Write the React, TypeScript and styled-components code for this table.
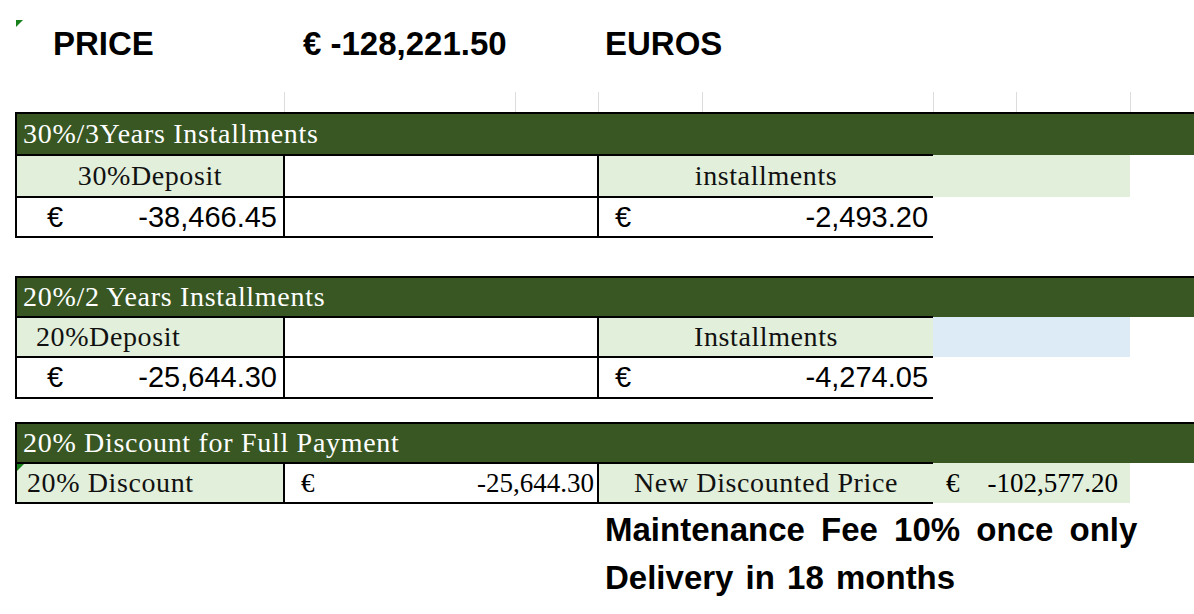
import styled, { createGlobalStyle } from "styled-components";

const GlobalStyle = createGlobalStyle`
  html, body {
    margin: 0;
    padding: 0;
    background: #ffffff;
  }
  body {
    width: 1194px;
    height: 614px;
    overflow: hidden;
  }
`;

const DARK = "#385723";
const LIGHT = "#E2EFDA";
const BLUE = "#DDEBF7";
const LINE = "2px solid #000";

const Page = styled.div`
    padding: 20px 0 0 15px;
`;

const Sheet = styled.table`
    border-collapse: collapse;
    table-layout: fixed;
    width: 1179px;
    font-family: "Liberation Serif", "Times New Roman", serif;
    color: #111;
`;

const Col = styled.col<{ $w: number }>`
    width: ${(p) => p.$w}px;
`;

const Row = styled.tr<{ $h: number }>`
    height: ${(p) => p.$h}px;
`;

const TitleCell = styled.td<{ $pad: number }>`
    position: relative;
    vertical-align: top;
    padding: 0 0 0 ${(p) => p.$pad}px;
    font-family: "Liberation Sans", Arial, sans-serif;
    font-weight: 700;
    font-size: 33px;
    line-height: 48px;
    white-space: nowrap;
    color: #000;
`;

const GridCell = styled.td<{ $line?: boolean }>`
    padding: 0;
    border-left: ${(p) => (p.$line ? "1px solid #dcdcdc" : "none")};
`;

const HeaderCell = styled.td`
    background: ${DARK};
    color: #fff;
    border-top: ${LINE};
    border-left: ${LINE};
    padding: 0 0 0 6px;
    font-size: 28px;
    letter-spacing: 0.7px;
    white-space: nowrap;
    vertical-align: middle;
`;

type Fill = "green" | "blue" | "white";
type Edge = "all" | "open" | "none";

const Cell = styled.td<{ $fill?: Fill; $edge?: Edge; $align?: string; $pad?: number }>`
    position: relative;
    padding: 0 0 0 ${(p) => p.$pad ?? 0}px;
    background: ${(p) => (p.$fill === "green" ? LIGHT : p.$fill === "blue" ? BLUE : "transparent")};
    text-align: ${(p) => p.$align ?? "left"};
    font-size: 28px;
    letter-spacing: 0.6px;
    white-space: nowrap;
    vertical-align: middle;
    border-top: ${(p) => (p.$edge === "none" || !p.$edge ? "none" : LINE)};
    border-bottom: ${(p) => (p.$edge === "none" || !p.$edge ? "none" : LINE)};
    border-left: ${(p) => (p.$edge === "none" || !p.$edge ? "none" : LINE)};
    border-right: ${(p) => (p.$edge === "all" ? LINE : "none")};
`;

const Money = styled.div<{ $sans?: boolean; $left: number; $right: number }>`
    display: flex;
    justify-content: space-between;
    align-items: center;
    padding: 0 ${(p) => p.$right}px 0 ${(p) => p.$left}px;
    font-family: ${(p) => (p.$sans ? '"Liberation Sans", Arial, sans-serif' : '"Liberation Serif", "Times New Roman", serif')};
    font-size: ${(p) => (p.$sans ? 29 : 27)}px;
    letter-spacing: 0;
    color: #000;
`;

const Note = styled.td<{ $ws: number }>`
    padding: 0 0 0 7px;
    font-family: "Liberation Sans", Arial, sans-serif;
    font-weight: 700;
    font-size: 33px;
    word-spacing: ${(p) => p.$ws}px;
    white-space: nowrap;
    vertical-align: middle;
    color: #000;
`;

const CommentMark = styled.span`
    position: absolute;
    top: 0;
    left: 0;
    width: 0;
    height: 0;
    border-top: 7px solid #17801a;
    border-right: 7px solid transparent;
`;

const widths = [268, 231, 83, 104, 231, 83, 114, 65];

export default function App() {
  return (
    <Page>
      <GlobalStyle />
      <Sheet>
        <colgroup>
          {widths.map((w, i) => (
            <Col key={i} $w={w} />
          ))}
        </colgroup>
        <tbody>
          <Row $h={72}>
            <TitleCell $pad={37}>
              <CommentMark />
              PRICE
            </TitleCell>
            <TitleCell $pad={19} colSpan={2}>€ -128,221.50</TitleCell>
            <TitleCell $pad={7} colSpan={2}>EUROS</TitleCell>
            <TitleCell $pad={0} colSpan={3} />
          </Row>
          <Row $h={21}>
            {widths.map((_, i) => (
              <GridCell key={i} $line={i > 0} />
            ))}
          </Row>

          {/* 30% / 3 years */}
          <Row $h={42}>
            <HeaderCell colSpan={8}>30%/3Years Installments</HeaderCell>
          </Row>
          <Row $h={42}>
            <Cell $fill="green" $edge="all" $align="center">30%Deposit</Cell>
            <Cell $edge="all" colSpan={2} />
            <Cell $fill="green" $edge="open" $align="center" colSpan={2}>installments</Cell>
            <Cell $fill="green" colSpan={2} />
            <Cell />
          </Row>
          <Row $h={40}>
            <Cell $edge="all">
              <Money $sans $left={30} $right={6}><span>€</span><span>-38,466.45</span></Money>
            </Cell>
            <Cell $edge="all" colSpan={2} />
            <Cell $edge="open" colSpan={2}>
              <Money $sans $left={16} $right={5}><span>€</span><span>-2,493.20</span></Money>
            </Cell>
            <Cell colSpan={3} />
          </Row>
          <Row $h={40}>
            <Cell colSpan={8} />
          </Row>

          {/* 20% / 2 years */}
          <Row $h={40}>
            <HeaderCell colSpan={8}>20%/2 Years Installments</HeaderCell>
          </Row>
          <Row $h={40}>
            <Cell $fill="green" $edge="all" $pad={19}>20%Deposit</Cell>
            <Cell $edge="all" colSpan={2} />
            <Cell $fill="green" $edge="open" $align="center" colSpan={2}>Installments</Cell>
            <Cell $fill="blue" colSpan={2} />
            <Cell />
          </Row>
          <Row $h={41}>
            <Cell $edge="all">
              <Money $sans $left={30} $right={6}><span>€</span><span>-25,644.30</span></Money>
            </Cell>
            <Cell $edge="all" colSpan={2} />
            <Cell $edge="open" colSpan={2}>
              <Money $sans $left={16} $right={5}><span>€</span><span>-4,274.05</span></Money>
            </Cell>
            <Cell colSpan={3} />
          </Row>
          <Row $h={25}>
            <Cell colSpan={8} />
          </Row>

          {/* full payment */}
          <Row $h={40}>
            <HeaderCell colSpan={8}>20% Discount for Full Payment</HeaderCell>
          </Row>
          <Row $h={40}>
            <Cell $fill="green" $edge="all" $pad={10}>
              <CommentMark />
              20% Discount
            </Cell>
            <Cell $edge="all" colSpan={2}>
              <Money $left={16} $right={3}><span>€</span><span>-25,644.30</span></Money>
            </Cell>
            <Cell $fill="green" $edge="open" $align="center" colSpan={2}>New Discounted Price</Cell>
            <Cell $fill="green" colSpan={2}>
              <Money $left={13} $right={12}><span>€</span><span>-102,577.20</span></Money>
            </Cell>
            <Cell />
          </Row>

          <Row $h={52}>
            <Cell colSpan={3} />
            <Note $ws={7} colSpan={5}>Maintenance Fee 10% once only</Note>
          </Row>
          <Row $h={45}>
            <Cell colSpan={3} />
            <Note $ws={3} colSpan={5}>Delivery in 18 months</Note>
          </Row>
        </tbody>
      </Sheet>
    </Page>
  );
}
